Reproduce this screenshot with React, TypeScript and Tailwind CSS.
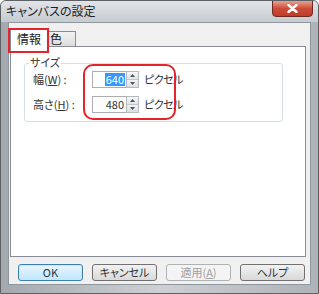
import React from "react";

const jp = { fontFamily: '"Noto Sans CJK JP", "Noto Sans", sans-serif', fontFeatureSettings: '"palt"' } as React.CSSProperties;

function Spin() {
  return (
    <div className="flex flex-col w-[13px] h-[17px] border border-[#b5b8bd] bg-[#eef0f2]">
      <div className="flex-1 flex items-center justify-center border-b border-[#c3c6ca] bg-gradient-to-b from-[#f6f7f8] to-[#e2e4e6]">
        <svg width="5" height="3" viewBox="0 0 5 3"><path d="M0 3 L2.5 0 L5 3 Z" fill="#4d5560" /></svg>
      </div>
      <div className="flex-1 flex items-center justify-center bg-gradient-to-b from-[#f1f2f3] to-[#dcdfe2]">
        <svg width="5" height="3" viewBox="0 0 5 3"><path d="M0 0 L2.5 3 L5 0 Z" fill="#4d5560" /></svg>
      </div>
    </div>
  );
}

function Row({ label, children }: { label: React.ReactNode; children: React.ReactNode }) {
  return (
    <div className="flex items-center h-[17px]">
      <div className="w-[59px] text-[11px] leading-none text-[#333]">{label}</div>
      {children}
    </div>
  );
}

function Btn({ children, variant }: { children: React.ReactNode; variant?: "default" | "disabled" }) {
  const base = "w-[65px] h-[17px] rounded-[3px] border flex items-center justify-center text-[11px] leading-none";
  if (variant === "default")
    return <div className={base + " border-[#3c7fb1] bg-gradient-to-b from-[#eaf6fd] to-[#bee6fd] text-[#333] shadow-[inset_0_0_0_1px_#c4e8fc]"}>{children}</div>;
  if (variant === "disabled")
    return <div className={base + " border-[#adb2b5] bg-[#f4f4f4] text-[#a0a0a0]"}>{children}</div>;
  return <div className={base + " border-[#707070] bg-gradient-to-b from-[#f2f2f2] to-[#d9d9d9] text-[#333]"}>{children}</div>;
}

export default function App() {
  return (
    <div style={jp} className="w-[319px] h-[294px] bg-white">
      <div className="w-[319px] h-[294px] flex flex-col border border-[#5d6166] rounded-t-[6px] bg-gradient-to-r from-[#a3a9af] via-[#cdd1d5] to-[#aeb3b9] overflow-hidden">
        {/* title bar */}
        <div className="h-[21px] flex items-start bg-gradient-to-b from-[#e1e4e8] to-[#c6cbd0]">
          <div className="pl-[5px] pt-[4px] text-[12px] leading-none text-[#1e1e1e]">キャンバスの設定</div>
          <div className="ml-auto mr-[5px] -mt-px w-[41px] h-[17px] rounded-b-[4px] border border-[#6e2a22] bg-gradient-to-b from-[#e3a290] via-[#cc4b3a] to-[#c23a28] flex items-center justify-center">
            <svg width="11" height="9" viewBox="0 0 11 9">
              <path d="M1.5 1 L9.5 8 M9.5 1 L1.5 8" stroke="#ffffff" strokeWidth="2.4" strokeLinecap="round" />
            </svg>
          </div>
        </div>
        {/* client */}
        <div className="mx-[7px] h-[263px] bg-[#f0f0f0] border border-[#8f969c] flex flex-col">
          {/* tabs */}
          <div className="h-[23px] flex items-end pl-[1px]">
            <div className="relative w-[38px] h-[19px] -mb-px z-10 bg-white border border-b-0 border-[#898c95] flex items-center justify-center pt-[1px] text-[12px] leading-none text-[#222]">
              情報
              <div className="absolute -left-[3px] -top-[1px] w-[41px] h-[25px] border-2 border-[#e3242b]" />
            </div>
            <div className="w-[28px] h-[15px] bg-gradient-to-b from-[#f2f2f2] to-[#dcdcdc] border border-b-0 border-l-0 border-[#898c95] flex items-center pl-[2px] text-[12px] leading-none text-[#222]">
              色
            </div>
          </div>
          {/* panel */}
          <div className="ml-[1px] mr-[4px] h-[211px] bg-white border border-[#898c95] pt-[16px] px-[13px]">
            <div className="relative w-[259px] h-[59px] border border-[#d5dfe5] rounded-[3px] pt-[7px] pl-[8px] flex flex-col gap-[8px]">
              <div className="absolute left-[4px] -top-[7px] bg-white px-[1px] text-[11px] leading-none text-[#333]">サイズ</div>
              <Row label={<span>幅(<u>W</u>) :</span>}>
                <div className="flex items-center">
                  <div className="w-[34px] h-[17px] border border-[#abadb3] border-r-0 flex items-center justify-end pr-[1px] text-[11px] leading-none">
                    <span className="bg-[#3399ff] text-white px-[1px] py-[1px]">640</span>
                  </div>
                  <Spin />
                  <span className="ml-[5px] text-[11px] leading-none text-[#333] tracking-[-0.5px]">ピクセル</span>
                </div>
              </Row>
              <Row label={<span>高さ(<u>H</u>) :</span>}>
                <div className="flex items-center">
                  <div className="w-[34px] h-[17px] border border-[#abadb3] border-r-0 flex items-center justify-end pr-[2px] text-[11px] leading-none text-[#333]">
                    480
                  </div>
                  <Spin />
                  <span className="ml-[5px] text-[11px] leading-none text-[#333] tracking-[-0.5px]">ピクセル</span>
                </div>
              </Row>
              <div className="absolute left-[58px] top-[0px] w-[93px] h-[56px] border-2 border-[#e3242b] rounded-[10px]" />
            </div>
          </div>
          {/* buttons */}
          <div className="mt-[7px] ml-[9px] flex gap-[9px]">
            <Btn variant="default">OK</Btn>
            <Btn>キャンセル</Btn>
            <Btn variant="disabled">適用(<u>A</u>)</Btn>
            <Btn>ヘルプ</Btn>
          </div>
        </div>
      </div>
    </div>
  );
}
